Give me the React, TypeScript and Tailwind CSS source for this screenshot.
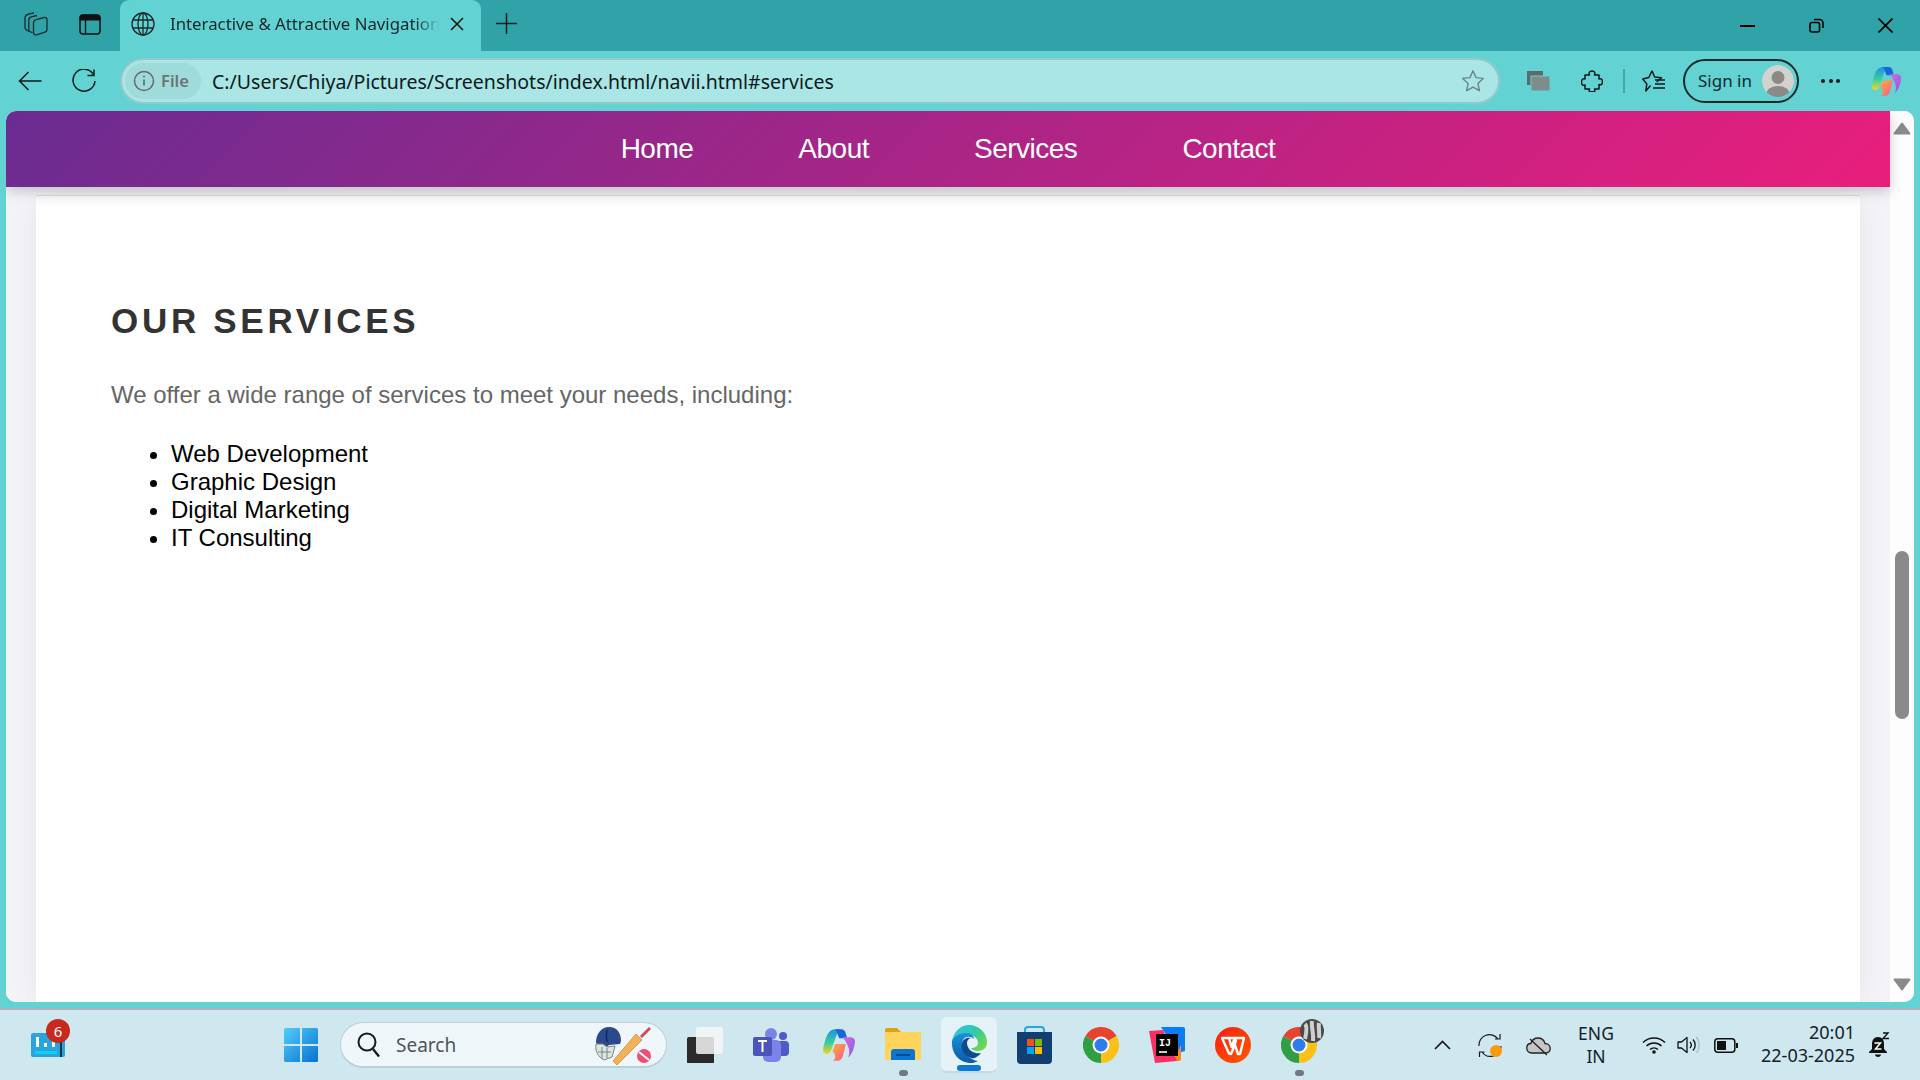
import React from "react";

const ui = { fontFamily: '"Noto Sans", "Open Sans", sans-serif' };
const page = { fontFamily: '"Liberation Sans", Arial, sans-serif' };

type P = { className?: string };
const S = ({ w, h = w, vb, children, className = "" }: { w: number; h?: number; vb: string; children: React.ReactNode; className?: string }) => (
  <svg width={w} height={h} viewBox={vb} fill="none" stroke="currentColor" className={"shrink-0 " + className}>{children}</svg>
);

const Collections = () => (
  <S w={24} vb="0 0 24 24" className="text-[#1c2b2d]">
    <path d="M5 19.500 2.500 18c-1-.6-1.500-1.500-1.500-2.500V6c0-1.500 1.500-3.500 4-4l5-1.200" strokeWidth="1.300" />
    <path d="M8.500 21 6 19.500c-.8-.6-1.200-1.400-1.200-2.300V8c0-1.500 1-2.800 2.600-3.200L13 3.500" strokeWidth="1.300" />
    <path d="M9.500 10.500c0-1.300.8-2.300 2-2.700l8.500-2.300c1.700-.4 3 .6 3 2.300v9.800c0 1.300-.8 2.300-2 2.600l-8.500 2.600c-1.700.4-3-.6-3-2.300z" strokeWidth="1.300" />
  </S>
);
const TabsIcon = () => (
  <S w={22} h={21} vb="0 0 22 21" className="text-[#111]">
    <rect x="1" y="1" width="20" height="19" rx="3" strokeWidth="1.500" />
    <path d="M1 3.500a2.500 2.500 0 0 1 2.500-2.500h15A2.500 2.500 0 0 1 21 3.500V6H1z" fill="currentColor" />
    <path d="M6.500 6v14" strokeWidth="1.300" />
  </S>
);
const Globe = () => (
  <S w={24} vb="0 0 24 24" className="text-[#1a2a2c]">
    <g strokeWidth="1.300">
      <circle cx="12" cy="12" r="11" />
      <ellipse cx="12" cy="12" rx="5" ry="11" />
      <path d="M2 8h20M2 16h20M12 1v22" />
    </g>
  </S>
);
const Star = ({ className = "" }: P) => (
  <S w={24} vb="0 0 24 24" className={className}>
    <path d="m12 1.800 3 6.800 7.300.8-5.400 5 1.500 7.300L12 18.200l-6.400 3.500 1.500-7.300-5.400-5 7.300-.8z" strokeWidth="1.400" strokeLinejoin="round" />
  </S>
);
const Puzzle = () => (
  <S w={22} vb="0 0 22 22" className="text-[#0d1a1b]">
    <path d="M4 5h4.500c-1-2-.2-4 2.500-4s3.500 2 2.500 4H18v4c2-1 3.500.2 3.500 2.700S20 15.500 18 14.500V19h-4.500c1 2 .2 2.800-2.500 2.800S7.500 21 8.500 19H4v-4c-2 1-3.500-.2-3.500-2.800S2 8 4 9z" strokeWidth="1.500" strokeLinejoin="round" />
  </S>
);
const FavBar = () => (
  <S w={24} vb="0 0 24 24" className="text-[#0d1a1b]">
    <path d="M10 1.800 12.600 8l6.900.7-4.800 4.300M8.500 16.500 3.800 22l1-7L.8 10l6-1.500L10 1.800" strokeWidth="1.500" strokeLinejoin="round" />
    <path d="M13 11h10M13 15h10M11 19h12" strokeWidth="1.500" />
  </S>
);
const CopilotLogo = ({ s, id }: { s: number; id: string }) => (
  <svg width={s} height={s} viewBox="0 0 32 32" className="shrink-0">
    <defs>
      <linearGradient id={id + "a"} x1="0" y1="0" x2="0" y2="1"><stop offset="0" stopColor="#1f8fe6" /><stop offset=".55" stopColor="#3ccf9a" /><stop offset="1" stopColor="#ffd21f" /></linearGradient>
      <linearGradient id={id + "b"} x1="0" y1="0" x2="1" y2="1"><stop offset="0" stopColor="#d36be0" /><stop offset="1" stopColor="#8a5ce8" /></linearGradient>
      <linearGradient id={id + "c"} x1="0" y1="0" x2="1" y2="1"><stop offset="0" stopColor="#ffb03b" /><stop offset="1" stopColor="#f6568a" /></linearGradient>
    </defs>
    <path d="M14 2c-6 0-8 5-10 12-1.500 5-2 9 1 10 2 .6 4-.6 5-3.500L14.500 8C15.500 5 17 3.500 20 2.500z" fill={`url(#${id}a)`} />
    <path d="M13 2h6c2.500 0 3.500 2 4 4l1 4h-7L15.500 6C15 4 14 2.500 13 2z" fill="#1667d9" />
    <path d="M20 9h7c3 0 4.500 2 4 5-.8 6-3 11-6 13 2-4 1-8-1-12-1-2-2.500-4.500-4-6z" fill={`url(#${id}b)`} />
    <path d="M11 22l2.500-7H23l-2.500 10c-.6 3-2.500 5-5 5h-4c1.500-1 2.200-2.500 2-4.500C13.200 24 12.300 22.500 11 22z" fill={`url(#${id}c)`} />
  </svg>
);
const Chrome = () => (
  <svg width="36" height="36" viewBox="0 0 36 36" className="shrink-0">
    <path d="M18 18 2.400 9A18 18 0 0 1 33.600 9Z" fill="#e8432f" />
    <path d="M18 18 33.600 9A18 18 0 0 1 18 36Z" fill="#fbc116" />
    <path d="M18 18 18 36A18 18 0 0 1 2.400 9Z" fill="#2f9e44" />
    <circle cx="18" cy="18" r="8.500" fill="#fff" />
    <circle cx="18" cy="18" r="6.500" fill="#2f7de8" />
  </svg>
);

const TabBar = () => (
  <div className="flex h-[51px] shrink-0 items-end bg-[#30a3a8]" style={ui}>
    <div className="ml-[24px] flex h-[51px] items-center pb-[3px]"><Collections /></div>
    <div className="ml-[31px] flex h-[51px] items-center pb-[3px]"><TabsIcon /></div>
    <div className="ml-[19px] flex h-[51px] w-[361px] items-center rounded-t-[9px] bg-[#62d2d2] pb-[3px] pl-[11px]">
      <Globe />
      <span className="ml-[15px] w-[272px] whitespace-nowrap bg-[linear-gradient(90deg,#12262a_90%,#62d2d2_99%)] bg-clip-text text-[16.800px] leading-[22px] text-transparent">Interactive &amp; Attractive Navigation</span>
      <svg width="14" height="14" viewBox="0 0 14 14" className="ml-[8px] text-[#111]" stroke="currentColor"><path d="M1 1l12 12M13 1 1 13" strokeWidth="1.500" /></svg>
    </div>
    <div className="ml-[15px] flex h-[51px] items-center pb-[4px] text-[#0f1f22]">
      <svg width="21" height="21" viewBox="0 0 21 21" stroke="currentColor"><path d="M10.500 0v21M0 10.500h21" strokeWidth="1.500" /></svg>
    </div>
    <div className="flex-1" />
    <div className="flex h-[51px] items-center text-[#000]">
      <svg width="15" height="2" viewBox="0 0 15 2" stroke="currentColor"><path d="M0 1h15" strokeWidth="2" /></svg>
      <svg width="15" height="15" viewBox="0 0 15 15" fill="none" stroke="currentColor" className="ml-[54px]"><rect x="1" y="4.500" width="9.500" height="9.500" rx="2" strokeWidth="1.600" /><path d="M5 1.500h5.500a3.500 3.500 0 0 1 3.500 3.500v5" strokeWidth="1.600" /></svg>
      <svg width="15" height="15" viewBox="0 0 15 15" stroke="currentColor" className="ml-[54px] mr-[27px]"><path d="M.5.500l14 14M14.500.500l-14 14" strokeWidth="1.700" /></svg>
    </div>
  </div>
);

const ToolBar = () => (
  <div className="flex h-[60px] shrink-0 items-center bg-[#62d2d2]" style={ui}>
    <svg width="24" height="20" viewBox="0 0 24 20" fill="none" stroke="#0e1a1c" className="ml-[18px] shrink-0"><path d="M23.500 10H1.500M10.500 1l-9 9 9 9" strokeWidth="1.500" /></svg>
    <svg width="24" height="24" viewBox="0 0 24 24" fill="none" stroke="#0e1a1c" className="ml-[30px] shrink-0"><path d="M21.500 5.500A11 11 0 1 0 23 12" strokeWidth="1.500" /><path d="M22 .500v6h-6.500" strokeWidth="1.500" /></svg>
    <div className="ml-[24px] flex h-[46px] w-[1380px] items-center rounded-full border-2 border-[#93c9ca] bg-[#a9e6e5] pl-[3px] pr-[13px]">
      <div className="flex h-[36px] w-[76px] items-center rounded-full bg-[#9fdbda] pl-[8px]">
        <svg width="22" height="22" viewBox="0 0 22 22" fill="none" stroke="#666" className="shrink-0"><circle cx="11" cy="11" r="9.500" strokeWidth="1.400" /><path d="M11 9.500v6" strokeWidth="1.600" /><circle cx="11" cy="6.500" r="1" fill="#666" stroke="none" /></svg>
        <span className="ml-[6px] text-[16.500px] font-semibold leading-[22px] text-[#6b7474]">File</span>
      </div>
      <span className="ml-[11px] flex-1 pt-px text-[19.500px] leading-[26px] text-[#0d1a1c]">C:/Users/Chiya/Pictures/Screenshots/index.html/navii.html#services</span>
      <Star className="text-[#6d8484]" />
    </div>
    <svg width="23" height="20" viewBox="0 0 23 20" className="ml-[27px] shrink-0"><rect x="0" y="0" width="16" height="14" fill="#5c6a6b" /><rect x="4" y="5" width="19" height="15" fill="#7f8c8c" stroke="#62d2d2" /></svg>
    <div className="ml-[31px]"><Puzzle /></div>
    <div className="ml-[20px] h-[24px] w-[2px] bg-[#42a6a7]" />
    <div className="ml-[17px]"><FavBar /></div>
    <div className="ml-[17px] flex h-[44px] w-[116px] items-center rounded-full border-2 border-[#15292b] pl-[13px]">
      <span className="text-[17px] leading-[24px] text-[#13282b]">Sign in</span>
      <svg width="32" height="32" viewBox="0 0 32 32" className="ml-[10px] shrink-0 rounded-full"><circle cx="16" cy="16" r="16" fill="#d4d2cd" /><circle cx="16" cy="12.500" r="6.500" fill="#8c8a86" /><ellipse cx="16" cy="29" rx="11.500" ry="8" fill="#8c8a86" /></svg>
    </div>
    <div className="ml-[22px] flex w-[19px] justify-between">
      <i className="size-[4px] rounded-full bg-[#0c1a1b]" /><i className="size-[4px] rounded-full bg-[#0c1a1b]" /><i className="size-[4px] rounded-full bg-[#0c1a1b]" />
    </div>
    <div className="ml-[29px]"><CopilotLogo s={33} id="cp1" /></div>
  </div>
);

const Arrow = ({ up }: { up?: boolean }) => (
  <svg width="18" height="13" viewBox="0 0 18 13" className="shrink-0"><path d={up ? "M9 1.500 16.500 11.500H1.500z" : "M1.500 1.500h15L9 11.500z"} fill="#8a8a8a" stroke="#8a8a8a" strokeWidth="2" strokeLinejoin="round" /></svg>
);

const Content = () => (
  <div className="mx-[6px] flex h-[891px] shrink-0 overflow-hidden rounded-[10px] bg-[#fdfdfd]" style={page}>
    <div className="flex min-w-0 flex-1 flex-col bg-[#f4f3f8]">
      <nav className="relative z-10 flex h-[76px] shrink-0 items-center justify-center gap-[105px] bg-[linear-gradient(135deg,#6a2c91_0%,#e91e7c_100%)] text-[28px] tracking-[-0.5px] text-white shadow-[0_4px_12px_rgba(0,0,0,0.2)]">
        <span>Home</span><span>About</span><span>Services</span><span>Contact</span>
      </nav>
      <section className="mx-[30px] mt-[8px] flex-1 border-t border-[#d8d8da] bg-white bg-[linear-gradient(180deg,#f7f7f7,#ffffff_12px)] pl-[75px] pt-[105px] shadow-[0_0_30px_rgba(0,0,0,0.06)]">
        <h2 className="text-[35px] font-bold leading-[40px] tracking-[3.700px] text-[#333]">OUR SERVICES</h2>
        <p className="mt-[40px] text-[24px] leading-[28px] text-[#666]">We offer a wide range of services to meet your needs, including:</p>
        <ul className="mt-[31px] list-disc pl-[60px] text-[24px] leading-[28px] text-black">
          <li>Web Development</li>
          <li>Graphic Design</li>
          <li>Digital Marketing</li>
          <li>IT Consulting</li>
        </ul>
      </section>
    </div>
    <div className="flex w-[24px] shrink-0 flex-col items-center bg-[#fdfdfd] pb-[11px] pt-[11px]">
      <Arrow up />
      <div className="mt-[416px] h-[168px] w-[14px] rounded-full bg-[#8a8a8a]" />
      <div className="flex-1" />
      <Arrow />
    </div>
  </div>
);

const Ico = ({ ml, children }: { ml: number; children: React.ReactNode }) => (
  <div className="flex h-full shrink-0 items-center" style={{ marginLeft: ml }}>{children}</div>
);

const Widgets = () => (
  <div className="relative h-[24px] w-[34px]">
    <svg width="34" height="24" viewBox="0 0 34 24"><rect width="34" height="24" rx="2" fill="#2aa3de" /><path d="M5 4h3v10H5zM13 10h3v4h-3zM21 8h3v6h-3z" fill="#fff" /><path d="M4 18h22v3H4z" fill="#0fd3ee" /><path d="M30 8v16" stroke="#111" strokeWidth="1.500" /></svg>
    <span className="absolute -right-[5px] -top-[14px] flex size-[24px] items-center justify-center rounded-full bg-[#c7291c] text-[15px] leading-none text-white" style={ui}>6</span>
  </div>
);
const WinLogo = () => (
  <svg width="36" height="36" viewBox="0 0 36 36" className="shrink-0">
    <defs><linearGradient id="win" x1="0" y1="0" x2="1" y2="1"><stop offset="0" stopColor="#52cdfb" /><stop offset="1" stopColor="#0672d0" /></linearGradient></defs>
    <path d="M1 2.500A1.500 1.500 0 0 1 2.500 1H17v16H1zM19 1h14.500A1.500 1.500 0 0 1 35 2.500V17H19zM1 19h16v16H2.500A1.500 1.500 0 0 1 1 33.500zM19 19h16v14.500a1.500 1.500 0 0 1-1.500 1.500H19z" fill="url(#win)" />
  </svg>
);
const CricketArt = () => (
  <svg width="62" height="44" viewBox="0 0 62 44" className="shrink-0">
    <path d="M2 20C2 11 7 4 15 4s12 6 12 14l-1 3-11 1-5 4z" fill="#2b4a8c" />
    <path d="M13 7c-1 5-1 8 0 12" stroke="#14275a" strokeWidth="1.500" fill="none" />
    <path d="M2 21c-1 7 2 13 8 16l8-3 3-11-8 1-4-3z" fill="#dfe5e2" stroke="#7b8682" strokeWidth="1" />
    <path d="M4 29h13M8 24v12M13 25v10" stroke="#7b8682" strokeWidth="1" />
    <path d="M19 38l4 4 25-25-6-6z" fill="#f0b35a" stroke="#d28a30" strokeWidth=".800" />
    <path d="M46 13l9-9 2 2-9 9z" fill="#d6455b" />
    <circle cx="50" cy="33" r="7" fill="#ef4f71" />
    <path d="M45 29l10 8" stroke="#fff" strokeWidth="2" />
  </svg>
);
const TaskView = () => (
  <svg width="36" height="36" viewBox="0 0 36 36" className="shrink-0">
    <rect x="0" y="10" width="27" height="27" rx="2" fill="#2a2a2a" />
    <rect x="9" y="0" width="27" height="27" rx="2" fill="#f6f6f6" fillOpacity=".85" />
  </svg>
);
const Teams = () => (
  <svg width="36" height="36" viewBox="0 0 36 36" className="shrink-0">
    <circle cx="18" cy="7" r="6" fill="#7b83eb" />
    <circle cx="30" cy="9" r="4" fill="#5059c9" />
    <rect x="24" y="14" width="12" height="15" rx="4" fill="#5059c9" />
    <rect x="10" y="13" width="18" height="22" rx="5" fill="#7b83eb" />
    <rect x="0" y="10" width="19" height="19" rx="2" fill="#4b53bc" />
    <path d="M5 14h9M9.500 14v11" stroke="#fff" strokeWidth="2" />
  </svg>
);
const Folder = () => (
  <svg width="36" height="34" viewBox="0 0 36 34" className="shrink-0">
    <path d="M0 2a2 2 0 0 1 2-2h10l4 4h20v6H0z" fill="#dba40d" />
    <rect x="0" y="4" width="36" height="28" rx="1" fill="#ffd45c" />
    <path d="M6 32V24a3 3 0 0 1 3-3h18a3 3 0 0 1 3 3v8z" fill="#0b76d1" />
    <path d="M11 27h14" stroke="#063d75" strokeWidth="1.500" />
  </svg>
);
const Edge = () => (
  <svg width="36" height="38" viewBox="0 0 36 38" className="shrink-0">
    <defs>
      <linearGradient id="eg" x1="0" y1="0" x2="1" y2=".7"><stop offset="0" stopColor="#2fc3ef" /><stop offset=".55" stopColor="#30c9a8" /><stop offset="1" stopColor="#6fd84b" /></linearGradient>
      <linearGradient id="eb" x1="0" y1="0" x2="0" y2="1"><stop offset="0" stopColor="#1b91da" /><stop offset="1" stopColor="#0b5aa8" /></linearGradient>
    </defs>
    <path d="M1 16C3 6 10 0 18 0c10 0 18 8 18 17 0 6-4 9-9 9-3 0-6-1-7-3 4 0 7-1.500 7-5 0-5-5-8-9-8-8 0-15 5-17 6z" fill="url(#eg)" />
    <path d="M1 16c2-5 8-8 14-8 5 0 8 3 8 6-3-3-9-3-11 1-3 6 0 15 9 19 2 1 4 2 6 2-3 1.500-5 2-7 2C9 38 0 29 1 16z" fill="url(#eb)" />
    <path d="M11 18c1-4 5-6 9-5-4 1-5 5-3 9 2 5 8 7 13 6-3 4-7 6-10 5-7-2-11-9-9-15z" fill="#0a4d8f" />
  </svg>
);
const Store = () => (
  <svg width="35" height="38" viewBox="0 0 35 38" className="shrink-0">
    <path d="M8 8V4a3 3 0 0 1 3-3h13a3 3 0 0 1 3 3v4" fill="none" stroke="#23a7ea" strokeWidth="2" />
    <path d="M0 6h35v28a4 4 0 0 1-4 4H4a4 4 0 0 1-4-4z" fill="#123f72" />
    <rect x="10" y="13" width="7" height="7" fill="#f25022" />
    <rect x="18" y="13" width="7" height="7" fill="#7fba00" />
    <rect x="10" y="21" width="7" height="7" fill="#00a4ef" />
    <rect x="18" y="21" width="7" height="7" fill="#ffb900" />
  </svg>
);
const Intellij = () => (
  <svg width="36" height="36" viewBox="0 0 36 36" className="shrink-0">
    <path d="M12 0h22a2 2 0 0 1 2 2v22l-7 2z" fill="#0a7cf5" />
    <path d="M26 30l6-12v14a2 2 0 0 1-2 2h-7z" fill="#f7891e" />
    <path d="M0 4l14-1 14 31-22 2z" fill="#fb2f62" />
    <rect x="7" y="7" width="22" height="22" fill="#000" />
    <text x="10" y="19" fontSize="10" fontFamily="Liberation Mono, monospace" fontWeight="700" fill="#fff">IJ</text>
    <path d="M10 25h8" stroke="#fff" strokeWidth="1.600" />
  </svg>
);
const Wps = () => (
  <svg width="36" height="36" viewBox="0 0 36 36" className="shrink-0">
    <defs><linearGradient id="wp" x1="0" y1="0" x2="1" y2="1"><stop offset="0" stopColor="#f81e12" /><stop offset="1" stopColor="#ff5a05" /></linearGradient></defs>
    <circle cx="18" cy="18" r="18" fill="url(#wp)" />
    <path d="M7 11h7l2.500 9L19 13l2 .5L19 20l-3 7-2-.5zM14 11h15l-4 16h-2l-3-9" fill="none" stroke="#fff" strokeWidth="2.400" strokeLinejoin="round" />
  </svg>
);
const Dot = () => <div className="mt-[3px] h-[6px] w-[9px] rounded-full bg-[#6e7a80]" />;

const Tray = () => (
  <div className="flex h-full items-center text-[#15202b]" style={ui}>
    <svg width="17" height="10" viewBox="0 0 17 10" fill="none" stroke="#1a1a1a" className="ml-[117px] shrink-0"><path d="M1 9l7.500-7.500L16 9" strokeWidth="1.700" /></svg>
    <svg width="25" height="25" viewBox="0 0 25 25" fill="none" stroke="#1a1a1a" className="ml-[27px] shrink-0">
      <path d="M1 13A10.500 10.500 0 0 1 20 6M22 1v5h-5M23 13A10.500 10.500 0 0 1 4 19M1.500 24v-5h5" strokeWidth="1.200" />
      <circle cx="18" cy="18" r="6" fill="#f99a0a" stroke="none" />
    </svg>
    <svg width="25" height="21" viewBox="0 0 25 21" fill="none" className="ml-[23px] shrink-0">
      <path d="M6 18C2 18 .800 15 .800 13c0-3 2-4.500 4-4.500C6 5 9 3 12 3s6 2 7 5.500c3 0 5.200 2 5.200 5s-2 4.500-5 4.500z" fill="#c6c6c6" stroke="#222" strokeWidth="1.300" />
      <path d="M4 4l17 16" stroke="#222" strokeWidth="1.300" />
    </svg>
    <div className="ml-[25px] w-[40px] pb-[1px] text-center text-[17.500px] leading-[23px]">ENG<br />IN</div>
    <svg width="24" height="18" viewBox="0 0 24 18" fill="none" stroke="#111" className="ml-[26px] shrink-0">
      <path d="M1 6.500C7 .500 17 .500 23 6.500M4.500 10c4-4 11-4 15 0M8 13.500c2.300-2 5.700-2 8 0" strokeWidth="1.400" />
      <circle cx="12" cy="16" r="1.800" fill="#111" stroke="none" />
    </svg>
    <svg width="24" height="18" viewBox="0 0 24 18" fill="none" stroke="#111" className="ml-[11px] shrink-0">
      <path d="M1 6h3.500L10 1.500v15L4.500 12H1z" strokeWidth="1.300" strokeLinejoin="round" />
      <path d="M13 6a4.500 4.500 0 0 1 0 6M16 3.500a8 8 0 0 1 0 11" strokeWidth="1.300" />
      <path d="M19.500 1a13 13 0 0 1 0 16" strokeWidth="1.300" stroke="#a9bcc1" />
    </svg>
    <svg width="24" height="15" viewBox="0 0 24 15" fill="none" className="ml-[13px] shrink-0">
      <rect x=".8" y=".8" width="20" height="13.400" rx="3" stroke="#111" strokeWidth="1.500" />
      <rect x="3" y="3" width="9" height="9" fill="#111" />
      <path d="M22 5h2v5h-2z" fill="#111" />
    </svg>
    <div className="ml-[15px] w-[102px] whitespace-nowrap pb-[3px] text-right text-[18px] leading-[23px]">20:01<br />22-03-2025</div>
    <svg width="22" height="26" viewBox="0 0 22 26" className="ml-[13px] shrink-0">
      <path d="M10 5c-4 0-6 3-6 7v5l-3 3v1h18v-1l-3-3v-5c0-4-2-7-6-7zM7 22.500h6c0 1.500-1.500 2.500-3 2.500s-3-1-3-2.500z" fill="#111" />
      <path d="M6.500 11h6l-5 6h6" stroke="#fff" strokeWidth="1.500" fill="none" />
      <path d="M15 1h5l-5 5.500h6" stroke="#111" strokeWidth="1.400" fill="none" />
    </svg>
  </div>
);

const TaskBar = () => (
  <div className="flex h-[72px] shrink-0 border-t-2 border-[#aab6bb] bg-[#cfe7ee]">
    <Ico ml={31}><Widgets /></Ico>
    <Ico ml={218}><WinLogo /></Ico>
    <Ico ml={21}>
      <div className="flex h-[46px] w-[327px] items-center rounded-full border border-b-2 border-[#b8d0d7] bg-[#eff7fa] pl-[16px] pr-[10px]" style={ui}>
        <svg width="24" height="26" viewBox="0 0 24 26" fill="none" stroke="#1c1c1c" className="shrink-0"><circle cx="10" cy="10" r="8.500" strokeWidth="2" /><path d="M16 17l6 7.500" strokeWidth="2.400" /></svg>
        <span className="ml-[15px] flex-1 text-[19px] leading-[26px] text-[#4d5558]">Search</span>
        <CricketArt />
      </div>
    </Ico>
    <Ico ml={20}><TaskView /></Ico>
    <Ico ml={30}><Teams /></Ico>
    <Ico ml={31}><CopilotLogo s={36} id="cp2" /></Ico>
    <Ico ml={29}>
      <div className="relative flex h-full flex-col items-center justify-center"><Folder /><div className="absolute bottom-[4px]"><Dot /></div></div>
    </Ico>
    <Ico ml={20}>
      <div className="relative flex h-[56px] w-[56px] flex-col items-center justify-center rounded-[6px] border-b-2 border-[#c5dae0] bg-[#e5f2f7]">
        <Edge />
        <div className="absolute bottom-[0px] h-[6px] w-[24px] rounded-full bg-[#0b78d4]" />
      </div>
    </Ico>
    <Ico ml={20}><Store /></Ico>
    <Ico ml={31}><Chrome /></Ico>
    <Ico ml={30}><Intellij /></Ico>
    <Ico ml={30}><Wps /></Ico>
    <Ico ml={30}>
      <div className="relative flex h-full items-center">
        <Chrome />
        <svg width="24" height="24" viewBox="0 0 24 24" className="absolute -right-[7px] top-[9px]"><circle cx="12" cy="12" r="12" fill="#4a4a4a" /><path d="M5 5c3 3 1 10 0 15M12 2c-1 6 2 12 1 20M19 4c-1 5 1 10 0 15" stroke="#d0d0d0" strokeWidth="4" fill="none" /></svg>
        <div className="absolute bottom-[4px] left-[14px]"><Dot /></div>
      </div>
    </Ico>
    <Tray />
  </div>
);

export default function App() {
  return (
    <div className="flex h-[1080px] w-[1920px] flex-col overflow-hidden bg-[#62d2d2]">
      <TabBar />
      <ToolBar />
      <Content />
      <div className="h-[6px] shrink-0" />
      <TaskBar />
    </div>
  );
}
